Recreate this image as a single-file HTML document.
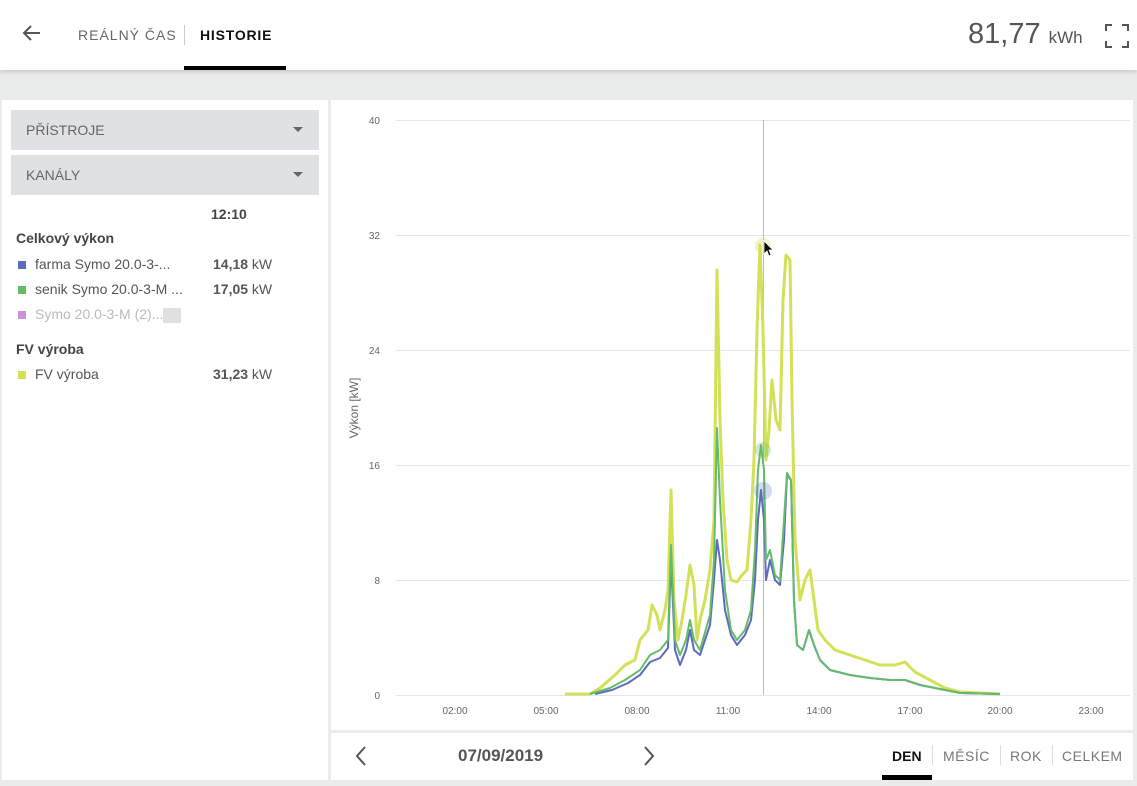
<!DOCTYPE html><html><head><meta charset="utf-8"><style>
*{margin:0;padding:0;box-sizing:border-box}
body{width:1137px;height:786px;background:#eaeceb;font-family:"Liberation Sans",sans-serif;position:relative;overflow:hidden;color:#555}
.top{position:absolute;left:0;top:0;width:1137px;height:70px;background:#fff;box-shadow:0 2px 4px rgba(0,0,0,.15)}
.a{position:absolute}
.side{position:absolute;left:2px;top:100px;width:326px;height:680px;background:#fff}
.dd{position:absolute;left:9px;width:308px;height:40px;background:#e0e1e3;font-size:14px;color:#666;padding:12px 15px}
.dd:after{content:"";position:absolute;right:16px;top:17px;border:5px solid transparent;border-top-color:#666}
.main{position:absolute;left:331px;top:100px;width:802px;height:630px;background:#fff}
.bot{position:absolute;left:331px;top:733px;width:802px;height:47px;background:#fff}
.sq{display:inline-block;width:8px;height:8px;margin-right:9px}
.row{position:absolute;left:16px;font-size:14px;color:#555}
.v{position:absolute;left:213px;font-size:14px;color:#555}
</style></head><body>
<div class="top">
<svg class="a" style="left:22px;top:24px" width="20" height="18" viewBox="0 0 20 18"><path d="M18 9H3M9 2L2 9l7 7" stroke="#555" stroke-width="2" fill="none"/></svg>
<div class="a" style="left:78px;top:27px;font-size:14px;letter-spacing:1px;color:#666">REÁLNÝ ČAS</div>
<div class="a" style="left:184px;top:25px;width:1px;height:20px;background:#ccc"></div>
<div class="a" style="left:200px;top:27px;font-size:14px;letter-spacing:.8px;font-weight:bold;color:#111">HISTORIE</div>
<div class="a" style="left:184px;top:66px;width:102px;height:4px;background:#000"></div>
<div class="a" style="left:968px;top:18px;font-size:29px;color:#555">81,77 <span style="font-size:17px">kWh</span></div>
<svg class="a" style="left:1105px;top:24px" width="24" height="24" viewBox="0 0 24 24"><path d="M1 7V1h6M17 1h6v6M23 17v6h-6M7 23H1v-6" stroke="#555" stroke-width="2" fill="none"/></svg>
</div>
<div class="side">
<div class="dd" style="top:10px">PŘÍSTROJE</div>
<div class="dd" style="top:55px">KANÁLY</div>
<div class="a" style="left:209px;top:106px;font-size:14px;font-weight:bold;color:#444">12:10</div>
<div class="row" style="top:130px;left:14px;font-weight:bold;color:#444">Celkový výkon</div>
<div class="row" style="top:156px"><span class="sq" style="background:#5c6bc0"></span>farma Symo 20.0-3-...</div><div class="v" style="top:156px;left:211px"><b>14,18</b> kW</div>
<div class="row" style="top:181px"><span class="sq" style="background:#66bb6a"></span>senik Symo 20.0-3-M ...</div><div class="v" style="top:181px;left:211px"><b>17,05</b> kW</div>
<div class="row" style="top:206px;color:#bbb"><span class="sq" style="background:#ce93d8"></span>Symo 20.0-3-M (2)...<span style="display:inline-block;width:18px;height:15px;background:#e0e0e0;vertical-align:middle"></span></div>
<div class="row" style="top:241px;left:14px;font-weight:bold;color:#444">FV výroba</div>
<div class="row" style="top:266px"><span class="sq" style="background:#d4e157"></span>FV výroba</div><div class="v" style="top:266px;left:211px"><b>31,23</b> kW</div>
</div>
<div class="main"></div>
<svg class="a" style="left:0;top:0" width="1137" height="786">
<g stroke="#e6e6e6" stroke-width="1"><path d="M396 120.5H1130M396 235.5H1130M396 350.5H1130M396 465.5H1130M396 580.5H1130M396 695.5H1130"/></g>
<g font-size="10" fill="#666" font-family="Liberation Sans" text-anchor="end"><text x="380" y="124">40</text><text x="380" y="239">32</text><text x="380" y="354">24</text><text x="380" y="469">16</text><text x="380" y="584">8</text><text x="380" y="699">0</text></g>
<g font-size="10" fill="#666" font-family="Liberation Sans" text-anchor="middle"><text x="455" y="714">02:00</text><text x="546" y="714">05:00</text><text x="637" y="714">08:00</text><text x="728" y="714">11:00</text><text x="819" y="714">14:00</text><text x="910" y="714">17:00</text><text x="1000" y="714">20:00</text><text x="1091" y="714">23:00</text></g>
<text x="358" y="408" font-size="12" fill="#666" font-family="Liberation Sans" text-anchor="middle" transform="rotate(-90 358 408)">Výkon [kW]</text>
<path d="M763.5 120V695" stroke="#bbb"/>
<polyline fill="none" stroke="#d4e157" stroke-width="3" stroke-linejoin="round" points="565,694 590,694 600,688 615,675 625,665 635,660 640,640 648,630 652,605 657,615 660,630 665,610 668,590 671,490 674,600 678,640 682,620 686,595 690,565 694,585 697,640 700,620 705,600 710,570 714,520 717,270 720,420 723,500 727,560 731,580 737,582 742,575 747,570 751,520 754,460 757,330 760,245 763,330 766,460 769,430 772,380 776,420 780,430 783,300 786,255 790,260 792,400 795,540 800,600 805,580 810,570 814,600 818,630 825,640 835,650 850,655 865,660 880,665 895,665 905,662 915,672 930,680 945,688 960,692 1000,694"/>
<polyline fill="none" stroke="#5c6bc0" stroke-width="2" stroke-linejoin="round" points="595,694 612,690 628,683 640,675 650,662 660,658 668,648 671,560 675,650 680,665 686,650 690,630 694,650 700,655 710,625 714,580 717,540 720,560 725,610 731,635 737,645 745,635 751,620 755,580 758,520 761,490 764,520 766,580 770,560 775,580 780,585 784,540 787,475 791,480 794,600 797,645 803,650 809,630 814,645 820,660 830,670 850,675 870,678 890,680 905,680 920,685 945,690 960,693 1000,694"/>
<polyline fill="none" stroke="#66bb6a" stroke-width="2" stroke-linejoin="round" points="590,694 610,688 625,680 640,670 650,655 660,650 668,640 671,545 675,640 680,655 686,640 690,620 694,640 700,650 710,615 714,560 717,428 720,500 725,590 731,630 737,640 745,630 751,610 755,550 758,470 761,445 764,470 766,560 770,550 775,575 780,580 784,520 787,473 791,480 794,600 797,645 803,650 809,630 814,645 820,660 830,670 850,675 870,678 890,680 905,680 920,685 945,690 960,693 1000,694"/>
<circle cx="763" cy="246" r="8" fill="#d4e157" opacity=".35"/><circle cx="763" cy="450" r="8" fill="#66bb6a" opacity=".3"/><circle cx="763" cy="491" r="9" fill="#5c6bc0" opacity=".25"/>
<path d="M764 241v13l3-3 2 5 2-1-2-5h4z" fill="#000" stroke="#fff" stroke-width=".8"/>
</svg>
<div class="bot">
<svg class="a" style="left:24px;top:13px" width="12" height="20"><path d="M10 1L2 10l8 9" stroke="#555" stroke-width="2" fill="none"/></svg>
<div class="a" style="left:127px;top:13px;font-size:17px;font-weight:bold;color:#555">07/09/2019</div>
<svg class="a" style="left:312px;top:13px" width="12" height="20"><path d="M2 1l8 9-8 9" stroke="#555" stroke-width="2" fill="none"/></svg>
<div class="a" style="left:561px;top:15px;font-size:14px;font-weight:bold;color:#111">DEN</div>
<div class="a" style="left:601px;top:12px;width:1px;height:20px;background:#ddd"></div>
<div class="a" style="left:612px;top:15px;font-size:14px;color:#777;letter-spacing:.5px">MĚSÍC</div>
<div class="a" style="left:669px;top:12px;width:1px;height:20px;background:#ddd"></div>
<div class="a" style="left:679px;top:15px;font-size:14px;color:#777;letter-spacing:.5px">ROK</div>
<div class="a" style="left:721px;top:12px;width:1px;height:20px;background:#ddd"></div>
<div class="a" style="left:731px;top:15px;font-size:14px;color:#777;letter-spacing:.5px">CELKEM</div>
<div class="a" style="left:551px;top:42px;width:50px;height:5px;background:#000"></div>
</div>
</body></html>
